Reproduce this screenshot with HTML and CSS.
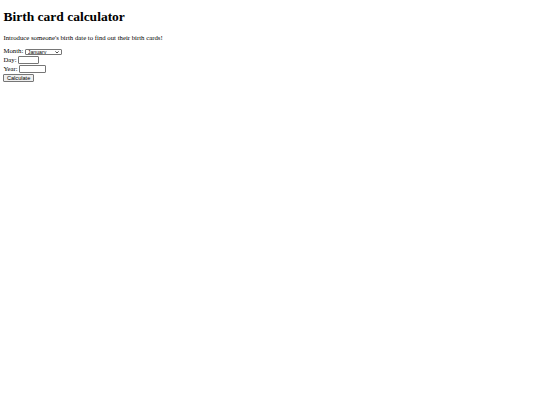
FILE: index.html
```html
<!DOCTYPE html>
<html>
<head>
<meta charset="utf-8">
<link rel="stylesheet" href="styles.css">
</head>
<body class="page">
<h1 class="title">Birth card calculator</h1>
<p class="intro">Introduce someone's birth date to find out their birth cards!</p>
<form class="form">
<div class="row row-month">
<label class="label">Month:</label>
<span class="select-wrap">
<select class="select"><option>January</option><option>February</option><option>March</option><option>April</option><option>May</option><option>June</option><option>July</option><option>August</option><option>September</option><option>October</option><option>November</option><option>December</option></select>
<svg class="chevron" viewBox="0 0 10 6" width="4" height="2.4"><path d="M1 1 L5 5 L9 1" fill="none" stroke="#000" stroke-width="1.8"/></svg>
</span>
</div>
<div class="row">
<label class="label">Day:</label>
<input class="input day" type="text">
</div>
<div class="row">
<label class="label">Year:</label>
<input class="input year" type="text">
</div>
<div class="row">
<button class="button" type="button">Calculate</button>
</div>
</form>
</body>
</html>
```
FILE: styles.css
```css
.page {
  margin: 0 3.4px 3.4px;
  font-family: "Liberation Serif", "Times New Roman", serif;
  font-size: 6.75px;
  color: #000;
  background: #fff;
}
.title {
  font-size: 13.5px;
  margin: 9px 0;
  font-weight: bold;
}
.intro {
  margin: 6.75px 0;
}
.form {
  display: flex;
  flex-direction: column;
}
.row {
  display: flex;
  align-items: center;
  gap: 1.5px;
  height: 9px;
}
.row-month {
  height: 8px;
}
.label {
  line-height: 1;
}
.select-wrap {
  position: relative;
  display: inline-block;
}
.select {
  appearance: none;
  -webkit-appearance: none;
  font-family: "Liberation Sans", Arial, sans-serif;
  font-size: 5.2px;
  width: 37px;
  height: 6.2px;
  box-sizing: border-box;
  padding: 0 0 0 2px;
  margin: 0;
  border: 0.5px solid #767676;
  border-radius: 1px;
  background: #fff;
  color: #000;
  line-height: 1;
  display: block;
}
.chevron {
  position: absolute;
  right: 2.5px;
  top: 2px;
  pointer-events: none;
}
.input {
  font-size: 5.6px;
  height: 7.6px;
  box-sizing: border-box;
  padding: 0 1px;
  margin: 0;
  border: 0.5px solid #767676;
  border-radius: 1px;
  background: #fff;
}
.day { width: 20.5px; }
.year { width: 27px; }
.button {
  font-family: "Liberation Sans", Arial, sans-serif;
  font-size: 5.6px;
  width: 30.5px;
  height: 8px;
  box-sizing: border-box;
  padding: 0;
  margin: 0;
  border: 0.5px solid #767676;
  border-radius: 1px;
  background: #efefef;
  color: #000;
}
```
